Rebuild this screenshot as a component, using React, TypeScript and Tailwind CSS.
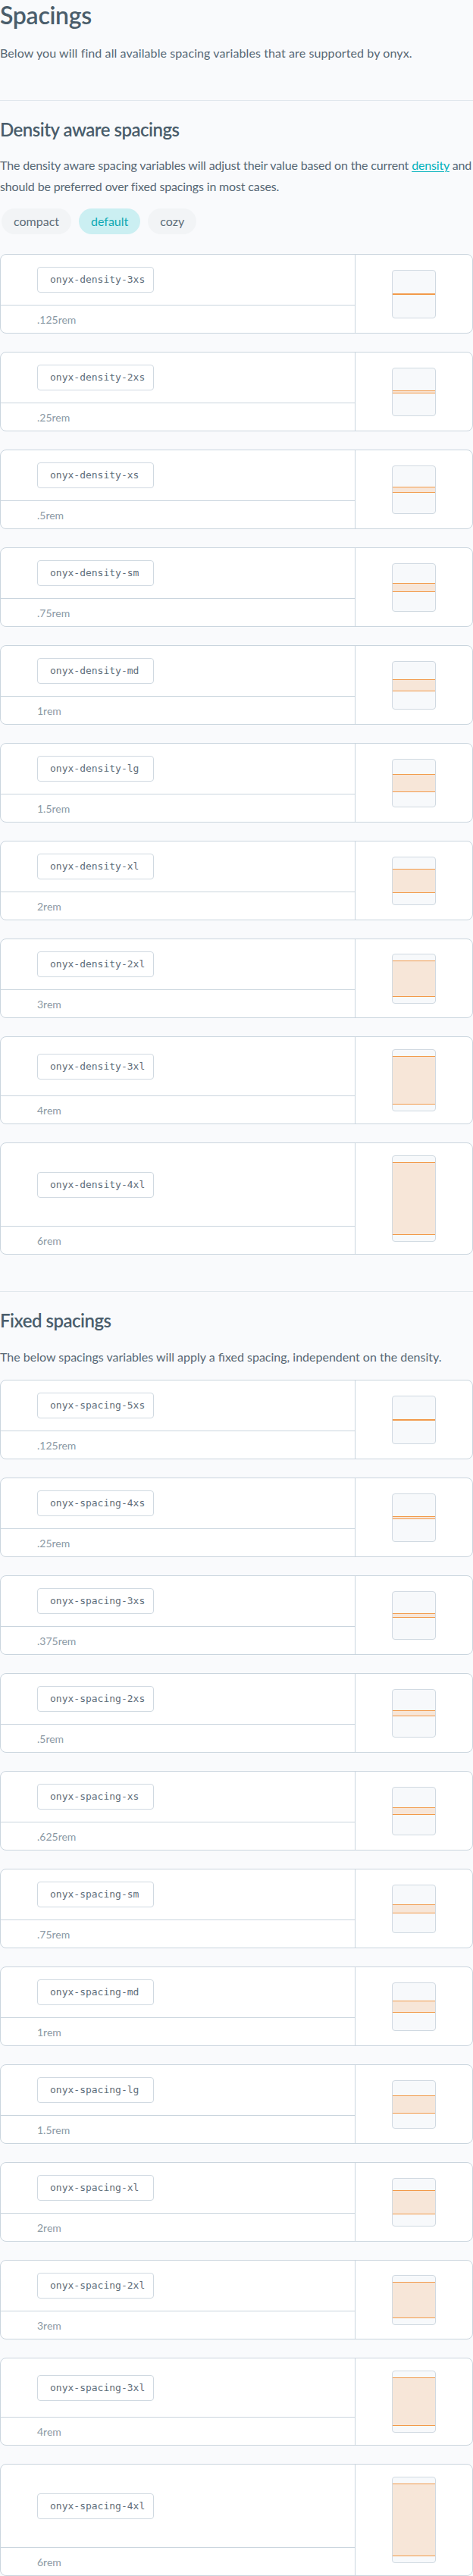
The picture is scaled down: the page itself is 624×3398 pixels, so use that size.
import React from "react";

interface Spacing {
  name: string;
  value: string;
  bar: string;
}

const densitySpacings: Spacing[] = [
  { name: "onyx-density-3xs", value: ".125rem", bar: "h-[2px]" },
  { name: "onyx-density-2xs", value: ".25rem", bar: "h-[4px]" },
  { name: "onyx-density-xs", value: ".5rem", bar: "h-[8px]" },
  { name: "onyx-density-sm", value: ".75rem", bar: "h-[12px]" },
  { name: "onyx-density-md", value: "1rem", bar: "h-[16px]" },
  { name: "onyx-density-lg", value: "1.5rem", bar: "h-[24px]" },
  { name: "onyx-density-xl", value: "2rem", bar: "h-[32px]" },
  { name: "onyx-density-2xl", value: "3rem", bar: "h-[48px]" },
  { name: "onyx-density-3xl", value: "4rem", bar: "h-[64px]" },
  { name: "onyx-density-4xl", value: "6rem", bar: "h-[96px]" },
];

const fixedSpacings: Spacing[] = [
  { name: "onyx-spacing-5xs", value: ".125rem", bar: "h-[2px]" },
  { name: "onyx-spacing-4xs", value: ".25rem", bar: "h-[4px]" },
  { name: "onyx-spacing-3xs", value: ".375rem", bar: "h-[6px]" },
  { name: "onyx-spacing-2xs", value: ".5rem", bar: "h-[8px]" },
  { name: "onyx-spacing-xs", value: ".625rem", bar: "h-[10px]" },
  { name: "onyx-spacing-sm", value: ".75rem", bar: "h-[12px]" },
  { name: "onyx-spacing-md", value: "1rem", bar: "h-[16px]" },
  { name: "onyx-spacing-lg", value: "1.5rem", bar: "h-[24px]" },
  { name: "onyx-spacing-xl", value: "2rem", bar: "h-[32px]" },
  { name: "onyx-spacing-2xl", value: "3rem", bar: "h-[48px]" },
  { name: "onyx-spacing-3xl", value: "4rem", bar: "h-[64px]" },
  { name: "onyx-spacing-4xl", value: "6rem", bar: "h-[96px]" },
];

function SpacingRow({ name, value, bar }: Spacing) {
  return (
    <div className="flex overflow-hidden rounded-lg border border-[#cad5de] bg-white">
      <div className="flex flex-1 flex-col">
        <div className="flex flex-1 items-center py-4 pl-12">
          <code className="flex h-[34px] w-[154px] items-center rounded border border-[#d0d9e1] pl-4 font-['DejaVu_Sans_Mono',monospace] text-[13px] text-[#5f6e7a]">
            {name}
          </code>
        </div>
        <div className="flex h-[37px] items-center border-t border-[#cad5de] pl-12 text-[14px] text-[#8b9aa6]">
          {value}
        </div>
      </div>
      <div className="flex w-[155px] items-center justify-center border-l border-[#cad5de] py-4">
        <div className="flex min-h-16 w-[58px] items-center rounded border border-[#d0d9e1] bg-[#f7f9fb] py-2">
          <div className={`w-full border-y border-[#f29a4a] bg-[#f7e6d8] ${bar}`} />
        </div>
      </div>
    </div>
  );
}

export default function App() {
  const densities = ["compact", "default", "cozy"];

  return (
    <div className="min-h-screen bg-[#f9fafc] font-['Lato',sans-serif] text-[#566774]">
      <header className="border-b border-[#e1e7ed] pb-12">
        <h1 className="mb-4 text-[32px] font-semibold leading-10 tracking-[-0.3px] text-[#4a5d6b]">Spacings</h1>
        <p className="text-base leading-7 tracking-[0.1px]">
          Below you will find all available spacing variables that are supported by onyx.
        </p>
      </header>

      <section className="border-b border-[#e1e7ed] pt-[22px] pb-12">
        <h2 className="text-2xl font-semibold leading-8 tracking-[-0.5px] text-[#4a5d6b]">Density aware spacings</h2>
        <p className="mt-[17px] text-base leading-7 tracking-[-0.15px]">
          The density aware spacing variables will adjust their value based on the current{" "}
          <a href="#" className="text-[#00b0bb] underline underline-offset-2">
            density
          </a>{" "}
          and should be preferred over fixed spacings in most cases.
        </p>
        <div className="mt-[15px] mb-[26px] flex gap-2.5 pl-0.5">
          {densities.map((d) => (
            <button
              key={d}
              className={
                d === "default"
                  ? "h-[34px] rounded-full bg-[#cbeff2] px-4 text-base text-[#0ea9b3]"
                  : "h-[34px] rounded-full bg-[#f2f4f6] px-4 text-base text-[#5e6e7a]"
              }
            >
              {d}
            </button>
          ))}
        </div>
        <div className="flex flex-col gap-6">
          {densitySpacings.map((item) => (
            <SpacingRow key={item.name} {...item} />
          ))}
        </div>
      </section>

      <section className="pt-[22px]">
        <h2 className="text-2xl font-semibold leading-8 tracking-[-0.5px] text-[#4a5d6b]">Fixed spacings</h2>
        <p className="mt-[18px] mb-4 text-base leading-7">
          The below spacings variables will apply a fixed spacing, independent on the density.
        </p>
        <div className="flex flex-col gap-6">
          {fixedSpacings.map((item) => (
            <SpacingRow key={item.name} {...item} />
          ))}
        </div>
      </section>
    </div>
  );
}
